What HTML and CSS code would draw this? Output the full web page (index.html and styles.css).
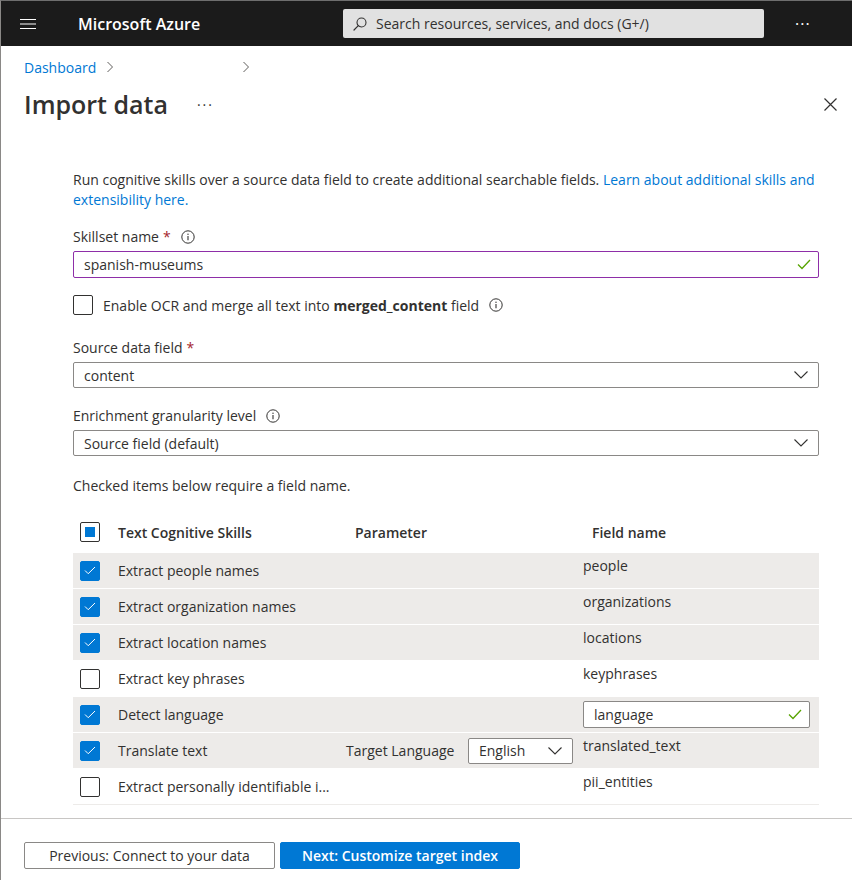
FILE: index.html
```html
<!DOCTYPE html>
<html>
<head>
<meta charset="utf-8">
<title>Import data - Microsoft Azure</title>
<link rel="stylesheet" href="styles.css">
</head>
<body>
<div class="topbar">
  <svg class="hamburger" width="16" height="12" viewBox="0 0 16 12"><path d="M0 1.5H16M0 6H16M0 10.5H16" stroke="#fff" stroke-width="1.2"/></svg>
  <div class="brand">Microsoft Azure</div>
  <div class="search">
    <svg class="search-icon" width="14" height="14" viewBox="0 0 14 14"><circle cx="8.5" cy="5.5" r="4.5" fill="none" stroke="#323130" stroke-width="1.1"/><path d="M5.3 8.7L1 13" stroke="#323130" stroke-width="1.2" stroke-linecap="round"/></svg>
    <span class="search-text">Search resources, services, and docs (G+/)</span>
  </div>
  <div class="top-more">&middot;&middot;&middot;</div>
</div>

<div class="blade">
  <div class="blade-header">
    <div class="breadcrumb">
      <a class="crumb">Dashboard</a>
      <svg class="crumb-sep" width="8" height="12" viewBox="0 0 8 12"><path d="M1.5 1L6.5 6L1.5 11" fill="none" stroke="#605e5c" stroke-width="1"/></svg>
      <span class="crumb-gap"></span>
      <svg class="crumb-sep" width="8" height="12" viewBox="0 0 8 12"><path d="M1.5 1L6.5 6L1.5 11" fill="none" stroke="#605e5c" stroke-width="1"/></svg>
    </div>
    <div class="title-row">
      <h1 class="title">Import data</h1>
      <span class="title-more">&middot;&middot;&middot;</span>
      <svg class="close" width="13" height="13" viewBox="0 0 13 13"><path d="M0.5 0.5L12.5 12.5M12.5 0.5L0.5 12.5" stroke="#323130" stroke-width="1.2"/></svg>
    </div>
  </div>

  <div class="content">
    <p class="intro">Run cognitive skills over a source data field to create additional searchable fields. <a class="link">Learn about additional skills and extensibility here.</a></p>

    <div class="label">Skillset name <span class="req">*</span>
      <svg class="info" width="14" height="14" viewBox="0 0 14 14"><circle cx="7" cy="7" r="6.2" fill="none" stroke="#323130" stroke-width="1"/><path d="M7 6V10.2" stroke="#323130" stroke-width="1.1"/><circle cx="7" cy="4.2" r="0.7" fill="#323130"/></svg>
    </div>
    <div class="textbox valid-purple">
      <span>spanish-museums</span>
      <svg class="okcheck" width="14" height="11" viewBox="0 0 14 11"><path d="M1 5.5L5 9.5L13 1" fill="none" stroke="#57a300" stroke-width="1.3"/></svg>
    </div>

    <div class="ocr-row">
      <span class="cb"></span>
      <span class="ocr-text">Enable OCR and merge all text into <b>merged_content</b> field</span>
      <svg class="info" width="14" height="14" viewBox="0 0 14 14"><circle cx="7" cy="7" r="6.2" fill="none" stroke="#323130" stroke-width="1"/><path d="M7 6V10.2" stroke="#323130" stroke-width="1.1"/><circle cx="7" cy="4.2" r="0.7" fill="#323130"/></svg>
    </div>

    <div class="label label-source">Source data field <span class="req">*</span></div>
    <div class="dropdown">
      <span>content</span>
      <svg class="chev" width="14" height="8" viewBox="0 0 14 8"><path d="M0.5 0.5L7 7L13.5 0.5" fill="none" stroke="#323130" stroke-width="1.1"/></svg>
    </div>

    <div class="label label-enrich">Enrichment granularity level
      <svg class="info" width="14" height="14" viewBox="0 0 14 14"><circle cx="7" cy="7" r="6.2" fill="none" stroke="#323130" stroke-width="1"/><path d="M7 6V10.2" stroke="#323130" stroke-width="1.1"/><circle cx="7" cy="4.2" r="0.7" fill="#323130"/></svg>
    </div>
    <div class="dropdown">
      <span>Source field (default)</span>
      <svg class="chev" width="14" height="8" viewBox="0 0 14 8"><path d="M0.5 0.5L7 7L13.5 0.5" fill="none" stroke="#323130" stroke-width="1.1"/></svg>
    </div>

    <p class="note">Checked items below require a field name.</p>

    <div class="skills">
      <div class="srow shead">
        <span class="cb cb-partial"><i></i></span>
        <span class="c-skill">Text Cognitive Skills</span>
        <span class="c-param h-pad">Parameter</span>
        <span class="c-field h-pad">Field name</span>
      </div>
      <div class="srow shaded">
        <span class="cb cb-on"><svg width="12" height="9" viewBox="0 0 12 9"><path d="M1 4.5L4.2 7.7L11 1" fill="none" stroke="#fff" stroke-width="1"/></svg></span>
        <span class="c-skill">Extract people names</span>
        <span class="c-param"></span>
        <span class="c-field top">people</span>
      </div>
      <div class="srow shaded">
        <span class="cb cb-on"><svg width="12" height="9" viewBox="0 0 12 9"><path d="M1 4.5L4.2 7.7L11 1" fill="none" stroke="#fff" stroke-width="1"/></svg></span>
        <span class="c-skill">Extract organization names</span>
        <span class="c-param"></span>
        <span class="c-field top">organizations</span>
      </div>
      <div class="srow shaded">
        <span class="cb cb-on"><svg width="12" height="9" viewBox="0 0 12 9"><path d="M1 4.5L4.2 7.7L11 1" fill="none" stroke="#fff" stroke-width="1"/></svg></span>
        <span class="c-skill">Extract location names</span>
        <span class="c-param"></span>
        <span class="c-field top">locations</span>
      </div>
      <div class="srow">
        <span class="cb"></span>
        <span class="c-skill">Extract key phrases</span>
        <span class="c-param"></span>
        <span class="c-field top">keyphrases</span>
      </div>
      <div class="srow shaded">
        <span class="cb cb-on"><svg width="12" height="9" viewBox="0 0 12 9"><path d="M1 4.5L4.2 7.7L11 1" fill="none" stroke="#fff" stroke-width="1"/></svg></span>
        <span class="c-skill">Detect language</span>
        <span class="c-param"></span>
        <span class="c-field">
          <span class="textbox field-input">
            <span>language</span>
            <svg class="okcheck" width="14" height="11" viewBox="0 0 14 11"><path d="M1 5.5L5 9.5L13 1" fill="none" stroke="#57a300" stroke-width="1.3"/></svg>
          </span>
        </span>
      </div>
      <div class="srow shaded">
        <span class="cb cb-on"><svg width="12" height="9" viewBox="0 0 12 9"><path d="M1 4.5L4.2 7.7L11 1" fill="none" stroke="#fff" stroke-width="1"/></svg></span>
        <span class="c-skill">Translate text</span>
        <span class="c-param param-lang">
          <span class="param-label">Target Language</span>
          <span class="dropdown lang-select">
            <span>English</span>
            <svg class="chev" width="14" height="8" viewBox="0 0 14 8"><path d="M0.5 0.5L7 7L13.5 0.5" fill="none" stroke="#323130" stroke-width="1.1"/></svg>
          </span>
        </span>
        <span class="c-field top">translated_text</span>
      </div>
      <div class="srow last">
        <span class="cb"></span>
        <span class="c-skill">Extract personally identifiable i...</span>
        <span class="c-param"></span>
        <span class="c-field top">pii_entities</span>
      </div>
    </div>
  </div>

  <div class="footer">
    <button class="btn btn-secondary">Previous: Connect to your data</button>
    <button class="btn btn-primary">Next: Customize target index</button>
  </div>
</div>
</body>
</html>
```
FILE: styles.css
```css
* { box-sizing: border-box; }
html, body { margin: 0; padding: 0; }
body {
  width: 852px;
  height: 880px;
  overflow: hidden;
  font-family: "Open Sans", "Noto Sans", sans-serif;
  font-size: 14px;
  color: #323130;
  background: #fff;
}

/* top bar */
.topbar {
  height: 46px;
  background: #1b1b1b;
  border-top: 1px solid #6e6e6e;
  border-left: 1px solid #8a8886;
  display: flex;
  align-items: center;
}
.hamburger { margin-left: 19px; }
.brand {
  margin-left: 42px;
  color: #fff;
  font-size: 16px;
  font-weight: 600;
  width: 265px;
}
.search {
  width: 421px;
  height: 29px;
  background: #e1e1e1;
  border-radius: 2px;
  display: flex;
  align-items: center;
  padding-left: 10px;
}
.search-icon { flex: none; }
.search-text {
  margin-left: 9px;
  font-size: 14px;
  color: #323130;
}
.top-more {
  margin-left: 31px;
  color: #fff;
  font-size: 16px;
  letter-spacing: 1px;
}

/* blade */
.blade {
  height: 834px;
  border-left: 1px solid #8a8886;
  display: flex;
  flex-direction: column;
}
.blade-header { padding: 11px 15px 0 23px; }
.breadcrumb {
  display: flex;
  align-items: center;
  height: 20px;
}
.crumb { color: #0078d4; font-size: 14px; }
.crumb-sep { margin-left: 10px; }
.crumb-gap { width: 118px; }
.title-row {
  display: flex;
  align-items: center;
  height: 36px;
  margin-top: 9px;
}
.title {
  margin: 0;
  font-size: 25px;
  font-weight: 600;
  color: #323130;
}
.title-more {
  margin-left: 29px;
  font-size: 14px;
  letter-spacing: 2px;
}
.close { margin-left: auto; }

.content {
  flex: 1;
  padding: 48px 33px 0 72px;
}
.intro {
  margin: 0;
  line-height: 20px;
}
.link { color: #0078d4; }
.label {
  margin-top: 17px;
  line-height: 20px;
  display: flex;
  align-items: center;
}
.req { color: #a4262c; margin-left: 4px; }
.info { margin-left: 10px; }
.label-source { margin-top: 23px; }
.label-enrich { margin-top: 18px; }

.textbox, .dropdown {
  margin-top: 4px;
  height: 27px;
  border: 1px solid #8a8886;
  border-radius: 2px;
  display: flex;
  align-items: center;
  padding: 0 6px 0 10px;
  justify-content: space-between;
}
.valid-purple { border-color: #8e2ea8; }
.okcheck { margin-right: 1px; }
.dropdown { height: 26px; }
.chev { margin-right: 4px; }

.ocr-row {
  margin-top: 17px;
  display: flex;
  align-items: center;
  height: 20px;
}
.ocr-text { margin-left: 10px; }
.ocr-text b { font-weight: 700; }

.cb {
  width: 20px;
  height: 20px;
  border: 1px solid #323130;
  border-radius: 2px;
  flex: none;
  display: flex;
  align-items: center;
  justify-content: center;
}
.cb-on { background: #0078d4; border-color: #0078d4; }
.cb-partial i {
  width: 10px;
  height: 10px;
  background: #0078d4;
  display: block;
}

.note {
  margin: 20px 0 0;
  line-height: 20px;
}

.skills { margin-top: 16px; }
.srow {
  display: grid;
  grid-template-columns: 38px 228px 237px 236px;
  align-items: center;
  height: 36px;
  border-bottom: 1px solid #fff;
  padding-left: 7px;
}
.srow.shaded { background: #edebe9; }
.srow.last { border-bottom: 1px solid #edebe9; }
.shead { height: 41px; font-weight: 600; }
.h-pad { padding-left: 9px; }
.c-field.top { align-self: start; padding-top: 3px; line-height: 20px; }
.field-input {
  margin-top: 0;
  width: 227px;
  height: 27px;
  background: #fff;
}
.param-lang { display: flex; align-items: center; }
.param-label { width: 122px; }
.lang-select {
  margin-top: 0;
  width: 105px;
  background: #fff;
}

.footer {
  height: 62px;
  border-top: 1px solid #c8c6c4;
  padding: 23px 0 0 23px;
  display: flex;
  align-items: flex-start;
  gap: 5px;
}
.btn {
  font-family: inherit;
  font-size: 14px;
  height: 27px;
  border-radius: 2px;
  padding: 0;
}
.btn-secondary {
  width: 251px;
  background: #fff;
  border: 1px solid #8a8886;
  color: #323130;
}
.btn-primary {
  width: 240px;
  background: #0078d4;
  border: 1px solid #0078d4;
  color: #fff;
  font-weight: 600;
}
```
